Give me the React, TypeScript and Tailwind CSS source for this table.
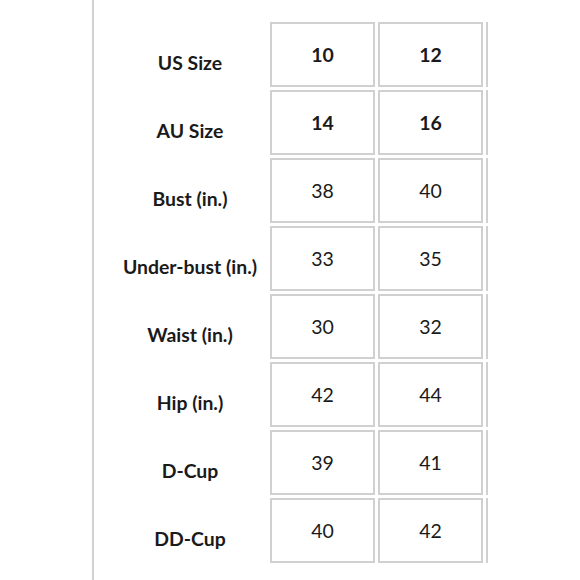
const rows = [
    { label: "US Size", a: "10", b: "12", bold: true },
    { label: "AU Size", a: "14", b: "16", bold: true },
    { label: "Bust (in.)", a: "38", b: "40", bold: false },
    { label: "Under-bust (in.)", a: "33", b: "35", bold: false },
    { label: "Waist (in.)", a: "30", b: "32", bold: false },
    { label: "Hip (in.)", a: "42", b: "44", bold: false },
    { label: "D-Cup", a: "39", b: "41", bold: false },
    { label: "DD-Cup", a: "40", b: "42", bold: false },
];

export default function App() {
    return (
        <div
            className="flex h-[580px] w-[580px] overflow-hidden bg-white text-[#1a1a1a]"
            style={{ fontFamily: "Lato, 'Open Sans', sans-serif" }}
        >
            {/* left margin + rule */}
            <div className="w-[92px] shrink-0" />
            <div className="w-[2px] shrink-0 bg-[#d2d2d2]" />

            {/* size table */}
            <div className="flex flex-col gap-[3px] pl-[16px] pt-[22px]">
                {rows.map((r) => (
                    <div key={r.label} className="flex h-[65px]">
                        <div className="flex w-[160px] items-center justify-center pt-[16px] text-[19.4px] font-bold">
                            {r.label}
                        </div>
                        <div
                            className={`flex w-[105px] items-center justify-center border-2 border-[#d0d0d0] text-[19.5px] ${r.bold ? "font-bold" : "font-normal"}`}
                        >
                            {r.a}
                        </div>
                        <div
                            className={`ml-[3px] flex w-[105px] items-center justify-center border-2 border-[#d0d0d0] text-[19.5px] ${r.bold ? "font-bold" : "font-normal"}`}
                        >
                            {r.b}
                        </div>
                        <div className="ml-[3px] w-[2px] bg-[#d0d0d0]" />
                    </div>
                ))}
            </div>
        </div>
    );
}
